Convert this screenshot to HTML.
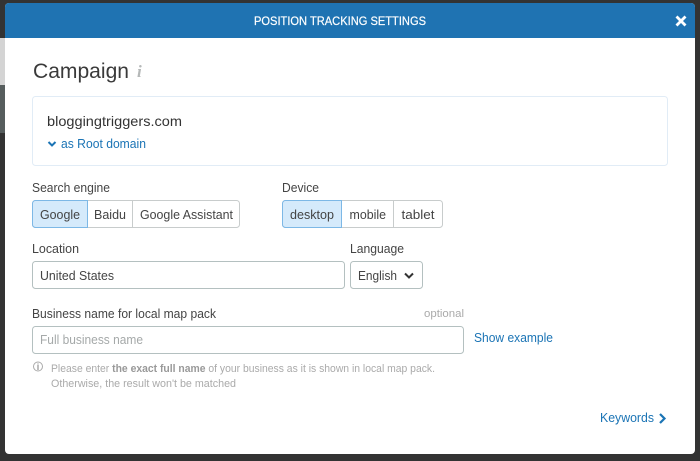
<!DOCTYPE html>
<html>
<head>
<meta charset="utf-8">
<style>
html,body{margin:0;padding:0;width:700px;height:461px;overflow:hidden;background:#333}
svg{display:block}
text{font-family:"Liberation Sans",sans-serif;fill:#333}
.l{font-size:13px;fill:#444}
.b{fill:#1b74b5}
.g{fill:#aaa;font-size:11px}
</style>
</head>
<body>
<svg width="700" height="461" viewBox="0 0 700 461" xmlns="http://www.w3.org/2000/svg">
<rect width="700" height="461" fill="#333"/>
<rect x="0" y="38" width="5" height="47" fill="#d4d4d4"/>
<rect x="0" y="85" width="5" height="48" fill="#565d5d"/>
<rect x="5" y="3" width="690" height="451" rx="4" fill="#fff"/>
<path d="M5 38V7a4 4 0 0 1 4-4H691a4 4 0 0 1 4 4V38Z" fill="#1f73b2"/>
<text x="254" y="25" font-size="12" textLength="172" lengthAdjust="spacingAndGlyphs" style="fill:#fff;stroke:#fff;stroke-width:.2">POSITION TRACKING SETTINGS</text>
<path d="M676.500 16.500L685.500 25.500M685.500 16.500L676.500 25.500" stroke="#fff" stroke-width="2.800" fill="none"/>

<text x="33" y="78" font-size="21" textLength="96" lengthAdjust="spacingAndGlyphs" style="fill:#3a3a3a">Campaign</text>
<text x="137" y="77" font-size="17" font-weight="bold" font-style="italic" style="font-family:'Liberation Serif',serif;fill:#b5b8b8">i</text>

<rect x="32.500" y="96.500" width="635" height="69" rx="3" fill="#fff" stroke="#e1ecf6"/>
<text x="47" y="126" font-size="14" textLength="135" lengthAdjust="spacingAndGlyphs">bloggingtriggers.com</text>
<path d="M48.500 142L52 145.500L55.500 142" stroke="#1b74b5" stroke-width="2" fill="none"/>
<text x="61" y="148" font-size="12.500" class="b" textLength="85" lengthAdjust="spacingAndGlyphs">as Root domain</text>

<text x="32" y="192" class="l" textLength="78" lengthAdjust="spacingAndGlyphs">Search engine</text>
<rect x="32.500" y="200.500" width="207" height="27" rx="3" fill="#fff" stroke="#c8cccc"/>
<path d="M35.500 200.500H87.500V227.500H35.500a3 3 0 0 1-3-3V203.500a3 3 0 0 1 3-3Z" fill="#d5eafb" stroke="#7db8e6"/>
<line x1="132.500" y1="200" x2="132.500" y2="228" stroke="#c8cccc"/>
<text x="40" y="219" class="l" textLength="40" lengthAdjust="spacingAndGlyphs">Google</text>
<text x="94" y="219" class="l" textLength="32" lengthAdjust="spacingAndGlyphs">Baidu</text>
<text x="140" y="219" class="l" textLength="93" lengthAdjust="spacingAndGlyphs">Google Assistant</text>

<text x="282" y="192" class="l" textLength="37" lengthAdjust="spacingAndGlyphs">Device</text>
<rect x="282.500" y="200.500" width="160" height="27" rx="3" fill="#fff" stroke="#c8cccc"/>
<path d="M285.500 200.500H341.500V227.500H285.500a3 3 0 0 1-3-3V203.500a3 3 0 0 1 3-3Z" fill="#d5eafb" stroke="#7db8e6"/>
<line x1="393.500" y1="200" x2="393.500" y2="228" stroke="#c8cccc"/>
<text x="290" y="219" class="l" textLength="44" lengthAdjust="spacingAndGlyphs">desktop</text>
<text x="349.500" y="219" class="l" textLength="36.500" lengthAdjust="spacingAndGlyphs">mobile</text>
<text x="401.500" y="219" class="l" textLength="33" lengthAdjust="spacingAndGlyphs">tablet</text>

<text x="32" y="253" class="l" textLength="47" lengthAdjust="spacingAndGlyphs">Location</text>
<rect x="32.500" y="261.500" width="312" height="27" rx="3" fill="#fff" stroke="#b4c0c0"/>
<text x="40" y="280" class="l" textLength="74" lengthAdjust="spacingAndGlyphs">United States</text>

<text x="350" y="253" class="l" textLength="54" lengthAdjust="spacingAndGlyphs">Language</text>
<rect x="350.500" y="261.500" width="72" height="27" rx="3" fill="#fff" stroke="#b4c0c0"/>
<text x="358" y="280" class="l" textLength="39" lengthAdjust="spacingAndGlyphs">English</text>
<path d="M405 273.500L409 277.500L413 273.500" stroke="#333" stroke-width="2" fill="none"/>

<text x="32" y="318" class="l" textLength="184" lengthAdjust="spacingAndGlyphs">Business name for local map pack</text>
<text x="424" y="317" class="g" textLength="40" lengthAdjust="spacingAndGlyphs">optional</text>
<rect x="32.500" y="326.500" width="431" height="27" rx="3" fill="#fff" stroke="#b4c0c0"/>
<text x="40" y="344" font-size="13" style="fill:#a5a9a9" textLength="103" lengthAdjust="spacingAndGlyphs">Full business name</text>
<text x="474" y="342" font-size="13" class="b" textLength="79" lengthAdjust="spacingAndGlyphs">Show example</text>

<circle cx="38" cy="366.500" r="4.500" fill="none" stroke="#aaa"/>
<text x="38" y="370" font-size="9" font-weight="bold" text-anchor="middle" style="fill:#999">i</text>
<text x="51" y="372" class="g" textLength="384" lengthAdjust="spacingAndGlyphs">Please enter <tspan font-weight="bold" style="fill:#999">the exact full name</tspan> of your business as it is shown in local map pack.</text>
<text x="51" y="387" class="g" textLength="185" lengthAdjust="spacingAndGlyphs">Otherwise, the result won't be matched</text>

<text x="600" y="422" font-size="13" class="b" textLength="54" lengthAdjust="spacingAndGlyphs">Keywords</text>
<path d="M660 414L664.500 418.500L660 423" stroke="#1b74b5" stroke-width="2.200" fill="none"/>
</svg>
</body>
</html>
